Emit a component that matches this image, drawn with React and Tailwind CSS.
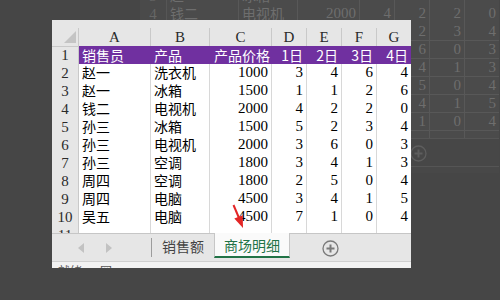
import React from "react";

const cols = "grid grid-cols-[27px_72px_59px_62px_35px_35px_35px_35px]";
const letters = ["A", "B", "C", "D", "E", "F", "G"];

const header = ["销售员", "产品", "产品价格", "1日", "2日", "3日", "4日"];
const rows = [
  ["赵一", "洗衣机", 1000, 3, 4, 6, 4],
  ["赵一", "冰箱", 1500, 1, 1, 2, 6],
  ["钱二", "电视机", 2000, 4, 2, 2, 0],
  ["孙三", "冰箱", 1500, 5, 2, 3, 4],
  ["孙三", "电视机", 2000, 3, 6, 0, 3],
  ["孙三", "空调", 1800, 3, 4, 1, 3],
  ["周四", "空调", 1800, 2, 5, 0, 4],
  ["周四", "电脑", 4500, 3, 4, 1, 5],
  ["吴五", "电脑", 4500, 7, 1, 0, 4],
];

const cjk = "font-['Noto_Sans_CJK_SC',sans-serif] text-[14px]";
const num = "font-['Liberation_Serif','Noto_Sans_CJK_SC',serif] text-[15px]";

// two looks for the same sheet: the live window and the dimmed one behind it
const light = {
  ghost: false,
  head: "bg-[#e6e6e6]",
  headText: "text-[#2a2a2a]",
  headLine: "border-[#c9c9c9]",
  cell: "bg-white text-black",
  grid: "border-[#d8d8d8]",
  purple: "bg-[#7030a0] text-white",
  tabbar: "bg-[#e6e6e6] border-[#c6c6c6]",
  tabText: "text-[#444]",
  active: "bg-[#fafafa] border-[#c6c6c6] text-[#217346]",
  activeLine: "border-b-[#217346]",
  sep: "bg-[#9c9c9c]",
  arrow: "#c2c2c2",
  plus: "#7a7a7a",
  status: "bg-[#f2f2f2] border-[#cfcfcf] text-[#555]",
  corner: "#c4c4c4",
};

const dark = {
  ghost: true,
  head: "bg-[#4a4a4a]",
  headText: "text-[#666]",
  headLine: "border-[#565656]",
  cell: "bg-[#4b4b4b] text-[#6e6e6e]",
  grid: "border-[#585858]",
  purple: "bg-[#3d2c4a] text-[#777]",
  tabbar: "bg-[#474747] border-[#555]",
  tabText: "text-[#5e5e5e]",
  active: "bg-[#4b4b4b] border-[#555] text-[#5e5e5e]",
  activeLine: "border-b-[#4f5a52]",
  sep: "bg-[#555]",
  arrow: "#555",
  plus: "#5e5e5e",
  status: "bg-[#484848] border-[#555] text-[#5a5a5a]",
  corner: "#555",
};

// the dimmed sheet only peeks out above the window (rows 3-4) and right of it (E-G)
const shows = (t, row, col) => !t.ghost || row <= 4 || col >= 4;

const Sheet = ({ t }) => (
  <div className="w-[359px] h-[248px] overflow-hidden flex flex-col">
    <div className={`h-2 shrink-0 ${t.head}`} />

    {/* column letters */}
    <div className={`${cols} h-[18px] shrink-0 ${t.head}`}>
      <div className={`relative border-r border-b ${t.headLine}`}>
        <svg className="absolute right-[2px] bottom-[3px]" width="12" height="12" viewBox="0 0 12 12">
          <polygon points="12,0 12,12 0,12" fill={t.corner} />
        </svg>
      </div>
      {letters.map((l) => (
        <div
          key={l}
          className={`border-r border-b ${t.headLine} ${t.headText} text-center leading-[18px] ${num}`}
        >
          {t.ghost ? "" : l}
        </div>
      ))}
    </div>

    {/* row 1, purple titles */}
    <div className={`${cols} h-[18px] shrink-0`}>
      <div className={`${t.head} ${t.headText} border-r border-b ${t.headLine} text-center leading-[18px] ${num}`}>
        {t.ghost ? "" : 1}
      </div>
      {header.map((h, j) => (
        <div
          key={h}
          className={`${t.purple} ${cjk} leading-[18px] whitespace-nowrap overflow-hidden ${j < 2 ? "text-left pl-[3px]" : j === 2 ? "text-left pl-[4px]" : "text-right pr-[4px]"}`}
        >
          {t.ghost ? "" : h}
        </div>
      ))}
    </div>

    {rows.map((r, i) => (
      <div key={i} className={`${cols} h-[18px] shrink-0`}>
        <div className={`${t.head} ${t.headText} border-r border-b ${t.headLine} text-center leading-[18px] ${num}`}>
          {shows(t, i + 2, 0) ? i + 2 : ""}
        </div>
        {r.map((v, j) => (
          <div
            key={j}
            className={`${t.cell} border-r border-b ${t.grid} leading-[17px] whitespace-nowrap overflow-hidden ${j < 2 ? `text-left pl-[3px] ${cjk}` : `text-right pr-[3px] ${num}`}`}
          >
            {shows(t, i + 2, j) ? v : ""}
          </div>
        ))}
      </div>
    ))}

    {/* row 11, cut by the tab bar */}
    <div className={`${cols} h-[7px] shrink-0 overflow-hidden`}>
      <div className={`${t.head} ${t.headText} border-r ${t.headLine} text-center leading-[18px] ${num}`}>
        {t.ghost ? "" : 11}
      </div>
      {letters.map((l) => (
        <div key={l} className={`${t.cell} border-r ${t.grid}`} />
      ))}
    </div>

    {/* sheet tabs */}
    <div className={`h-[28px] shrink-0 flex items-start ${t.tabbar} ${cjk}`}>
      <div className={`w-[99px] h-full border-t ${t.tabbar} flex items-center gap-[22px] pl-[26px]`}>
        <svg width="6" height="10" viewBox="0 0 6 10">
          <polygon points="6,0 6,10 0,5" fill={t.arrow} />
        </svg>
        <svg width="6" height="10" viewBox="0 0 6 10">
          <polygon points="0,0 0,10 6,5" fill={t.arrow} />
        </svg>
      </div>
      <div className={`w-px h-full border-t ${t.tabbar} flex items-start pt-[4px]`}>
        <div className={`w-px h-[19px] ${t.sep}`} />
      </div>
      <div className={`w-[62px] h-full border-t ${t.tabbar} ${t.tabText} text-center leading-[22px] pt-[1px]`}>
        {t.ghost ? "" : "销售额"}
      </div>
      <div className={`w-[76px] h-[25px] border-l border-r border-b-2 ${t.active} ${t.activeLine} text-center leading-[22px] pt-[1px]`}>
        {t.ghost ? "" : "商场明细"}
      </div>
      <div className={`flex-1 h-full border-t ${t.tabbar} pl-[32px] pt-[6px]`}>
        <svg width="17" height="17" viewBox="0 0 17 17">
          <circle cx="8.5" cy="8.5" r="7.5" fill="none" stroke={t.plus} strokeWidth="1.3" />
          <path d="M8.5 4.5v8M4.5 8.5h8" stroke={t.plus} strokeWidth="2" />
        </svg>
      </div>
    </div>

    {/* status bar, mostly cut */}
    <div className={`h-[7px] shrink-0 overflow-hidden border-t ${t.status} flex gap-[18px] pl-[6px] pt-[2px] font-['Noto_Sans_CJK_SC',sans-serif] text-[12px] leading-[14px]`}>
      {!t.ghost && (
        <>
          <span>就绪</span>
          <span>囲</span>
        </>
      )}
    </div>
  </div>
);

const App = () => {
  return (
    <div className="relative w-[500px] h-[300px] overflow-hidden bg-[#464646]">
      <div className="absolute left-[140px] top-[-75px]">
        <Sheet t={dark} />
      </div>
      <div className="absolute left-[52px] top-[20px]">
        <Sheet t={light} />
      </div>
      <svg className="absolute left-0 top-0 pointer-events-none" width="500" height="300" viewBox="0 0 500 300">
        <line x1="233.5" y1="205" x2="238.8" y2="217.5" stroke="#e32626" strokeWidth="2" />
        <polygon points="243,228 234.3,218.6 242.7,215.2" fill="#e32626" />
      </svg>
    </div>
  );
};

export default App;
